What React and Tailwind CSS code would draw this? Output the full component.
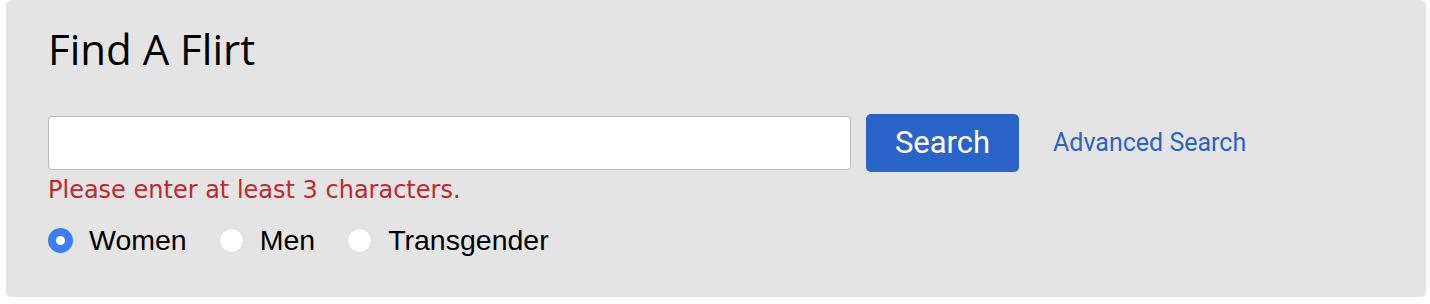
import React from "react";

function Radio({ checked, label }) {
  return (
    <label className="flex items-center">
      {checked ? (
        <span className="flex h-[25px] w-[25px] items-center justify-center rounded-full bg-[#3a80f3]">
          <span className="h-[9px] w-[9px] rounded-full bg-white" />
        </span>
      ) : (
        <span className="h-[25px] w-[25px] rounded-full border border-[#dddddd] bg-white" />
      )}
      <span className="ml-[16px] text-[28.5px] leading-none text-black [font-family:'Liberation_Sans',Arial,sans-serif]">
        {label}
      </span>
    </label>
  );
}

export default function App() {
  return (
    <div className="h-[304px] w-[1430px] bg-white">
      <div className="ml-[6px] h-[297px] w-[1420px] rounded-[5px] bg-[#e4e4e4] pl-[42px] pt-[28px]">
        <h1 className="text-[42px] leading-none text-black [font-family:'Open_Sans',sans-serif]">
          Find A Flirt
        </h1>
        <div className="mt-[44px] flex items-center">
          <input
            type="text"
            className="h-[54px] w-[803px] rounded-[4px] border-[1.5px] border-[#b9b9b9] bg-white px-3 outline-none"
          />
          <button className="ml-[15px] h-[58px] w-[153px] rounded-[5px] bg-[#2b64c8] text-[31px] text-white [font-family:Roboto,sans-serif]">
            Search
          </button>
          <a className="ml-[34px] text-[25px] text-[#2a64c3] [font-family:Roboto,sans-serif]">
            Advanced Search
          </a>
        </div>
        <div className="mt-[6px] text-[24px] leading-none text-[#c1282b] [font-family:'DejaVu_Sans',Verdana,sans-serif]">
          Please enter at least 3 characters.
        </div>
        <div className="mt-[24px] flex items-center gap-[32px]">
          <Radio checked label="Women" />
          <Radio label="Men" />
          <Radio label="Transgender" />
        </div>
      </div>
    </div>
  );
}
